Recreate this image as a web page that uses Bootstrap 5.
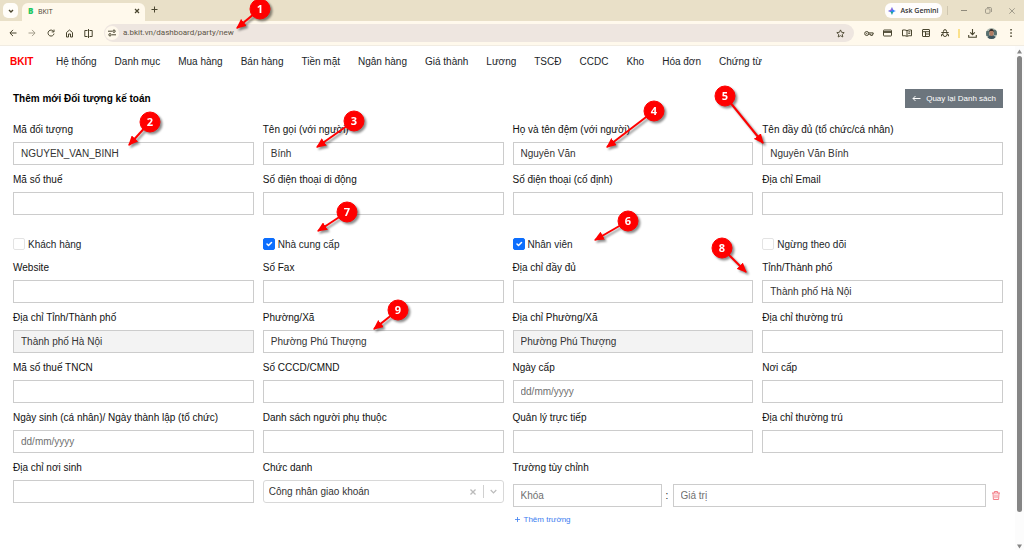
<!DOCTYPE html>
<html lang="vi">
<head>
<meta charset="utf-8">
<meta name="viewport" content="width=device-width, initial-scale=1">
<title>BKIT</title>
<link rel="stylesheet" href="https://cdn.jsdelivr.net/npm/bootstrap@5.3.0/dist/css/bootstrap.min.css">
<style>
  body { font-family: "Liberation Sans", Arial, sans-serif; font-size: 10px; line-height: 15px; color: #212529; }
  svg { display: block; fill: none; stroke: currentColor; }
  svg[stroke="none"] { stroke: none; }
  .plain-btn { border: 0; background: none; padding: 0; color: inherit; display: flex; align-items: center; justify-content: center; flex: none; }

  /* browser frame */
  .chrome { font-family: "Open Sans", "Noto Sans", sans-serif; color: #49452f; }
  .tab-strip { height: 21px; background: #e9e0c8; padding-left: 3px; }
  .tab-menu { width: 15px; height: 15px; border-radius: 5px; background: #fffdf9; margin: 3px 4px 0 0; }
  .tab-open { width: 123px; height: 18px; margin-top: 3px; padding: 0 5px 2px 6px; border-radius: 6px 6px 0 0; background: #fff9ec; font-size: 7px; }
  .tab-icon { color: #1fc862; font: 900 8px/12px "Open Sans", sans-serif; width: 10px; }
  .gemini { width: 57px; height: 15px; margin-top: 3px; border-radius: 6px; background: #fffdfd; font-size: 7px; font-weight: 600; color: #333; }
  .win-line { width: 1px; height: 9px; background: #cfc6af; margin: 6px 4px 0 5px; }
  .win-btn { width: 24px; height: 21px; color: #8f8a7c; }
  .toolbar { height: 25px; background: #fff9ec; padding: 0 4px 0 3px; border-bottom: 1px solid #f1ece2; }
  .tool-btn { width: 19px; height: 19px; }
  .address { height: 18px; border-radius: 9px; background: #eee6e0; margin: 0 5px 0 6px; }
  .site-btn { width: 14px; height: 14px; border-radius: 7px; background: #fff9ec; margin-left: 1px; }
  .address input { border: 0; background: none; outline: 0; font-family: Roboto, sans-serif; font-size: 8px; line-height: 14px; padding: 0 0 0 4px; color: #5c5546; min-width: 0; }
  .tool-line { width: 9px; }
  .tool-line span { width: 2px; height: 9px; background: #fbe18c; }
  .avatar { width: 11px; height: 11px; border-radius: 50%; overflow: hidden; }

  /* page */
  .site-nav { padding: 8px 10px 7px; }
  .site-nav .brand { color: #f00; font-weight: 700; text-decoration: none; width: 37px; }
  .site-nav .nav-link { color: #212529; padding: 0 9px; }
  .page { padding: 13px 12px 8px 13px; }
  .page-title { font-size: 10px; line-height: 19px; font-weight: 700; color: #000; margin: 0; }
  .back-btn { --bs-btn-padding-x: 6px; --bs-btn-padding-y: 0; --bs-btn-font-size: 8px; --bs-btn-border-radius: 0; line-height: 17px; gap: 5px; }
  .fields { --bs-gutter-x: 9px; margin-top: 14px; }
  .field { position: relative; margin-bottom: 7px; }
  .field label, .field-name { display: block; color: #111; line-height: 15px; margin-bottom: 5px; }
  .field .form-control { height: 23px; border: 1px solid #ccc; border-radius: 0; font-size: 10px; line-height: 15px; padding: 0 7px; color: #333; }
  .form-control::placeholder { color: #707070; }
  .field .form-control[readonly] { background: #f3f3f3; }
  .tick { position: relative; height: 16px; margin: 14px 0 8px; gap: 3px; }
  .tick .form-check-input { width: 12px; height: 12px; margin: 0; flex: none; border-color: #e3e3e3; border-radius: 2px; }
  .tick .form-check-input:checked { border-color: #0d6efd; }
  .picker { height: 23px; border: 1px solid #d8d8d8; border-radius: 3px; color: #bbb; }
  .picker select { appearance: none; border: 0; background: none; outline: 0; color: #333; padding: 0 5px; min-width: 0; }
  .picker .plain-btn { width: 19px; }
  .picker-line { width: 1px; height: 13px; background: #d0d0d0; }
  .custom-row { margin-top: 9px; }
  .custom-row .key { width: 149px; }
  .colon { width: 11px; }
  .trash { width: 17px; padding-right: 3px; color: #f2707a; }
  .trash.plain-btn { justify-content: flex-end; }
  .add-btn { color: #3b7df0; font-size: 8px; gap: 4px; margin: 5px 0 0 2px; }

  /* scroll track beside the page */
  .track { width: 9px; background: #fcfcfc; color: #858585; padding: 3px 0 0; }
  .track .thumb { width: 5px; height: 91%; border-radius: 3px; background: #858585; margin-top: 2px; }

  /* numbered callouts lying over the form; each one's origin is the centre of its disc */
  .callout { position: absolute; z-index: 5; width: 1px; height: 1px; overflow: visible; pointer-events: none; filter: drop-shadow(2px 2px 1px rgba(0,0,0,.45)); stroke: #f00; fill: #f00; }
  .callout text { fill: #fff; stroke: none; font: 700 11px "Open Sans", sans-serif; text-anchor: middle; }
  .c1 { left: 156px; top: -15px; }
  .c2 { left: 137px; top: 0; }
  .c3 { left: 91px; top: -1px; }
  .c4 { left: 141px; top: -11px; }
  .c5 { left: -37px; top: -26px; }
  .c6 { left: 115px; top: -15px; }
  .c7 { left: 84px; top: -24px; }
  .c8 { left: -40px; top: -12px; }
  .c9 { left: 135px; top: 0; }
</style>
<script src="https://cdn.jsdelivr.net/npm/bootstrap@5.3.0/dist/js/bootstrap.bundle.min.js"></script>
</head>
<body class="min-vh-100 d-flex flex-column bg-white">

<svg width="0" height="0" class="position-absolute" aria-hidden="true">
  <defs>
    <marker id="tip" viewBox="0 0 9 8" refX="8" refY="4" markerWidth="10" markerHeight="9" markerUnits="userSpaceOnUse" orient="auto"><path d="M0 0L9 4L0 8Z" fill="#f00" stroke="none"/></marker>
  </defs>
</svg>

<header class="chrome">
  <div class="tab-strip d-flex">
    <button class="plain-btn tab-menu" aria-label="Tabs"><svg width="6" height="6" viewBox="0 0 6 6" stroke-width="1.4"><path d="M1 2l2 2 2-2"/></svg></button>
    <div class="tab-open d-flex align-items-center">
      <span class="tab-icon">B</span><span class="flex-grow-1">BKIT</span>
      <button class="plain-btn" aria-label="Close tab"><svg width="6" height="6" viewBox="0 0 6 6" stroke-width="1.200"><path d="M1 1l4 4M5 1L1 5"/></svg></button>
    </div>
    <button class="plain-btn tool-btn" aria-label="New tab"><svg width="7" height="7" viewBox="0 0 7 7" stroke-width="1"><path d="M3.500 .5v6M.5 3.500h6"/></svg></button>
    <button class="plain-btn gemini ms-auto gap-1"><svg width="8" height="8" viewBox="0 0 8 8" stroke="none"><path d="M4 0Q4.600 3.400 8 4Q4.600 4.600 4 8Q3.400 4.600 0 4Q3.400 3.400 4 0Z" fill="#3186ff"/><path d="M4 0Q4.400 2 4.700 2.700L2 4.500Q1 4.200 0 4Q3.400 3.400 4 0Z" fill="#a55bd0"/><path d="M2.500 4.700L4.500 4.500 4.700 5.300Q4.300 6.500 4 8Q3.400 5.200 2.500 4.700Z" fill="#20b060"/></svg>Ask Gemini</button>
    <span class="win-line"></span>
    <button class="plain-btn win-btn" aria-label="Minimize"><svg width="6" height="6" viewBox="0 0 6 6" stroke-width="1"><path d="M0 2.500h6"/></svg></button>
    <button class="plain-btn win-btn" aria-label="Restore"><svg width="7" height="7" viewBox="0 0 7 7" stroke-width=".8"><rect x=".5" y="1.800" width="4.500" height="4.500" rx="1"/><path d="M2 .5h3.200q1.300 0 1.300 1.300V5"/></svg></button>
    <button class="plain-btn win-btn" aria-label="Close"><svg width="6" height="6" viewBox="0 0 6 6" stroke-width=".8"><path d="M.3.3l5.400 5.400M5.700.3L.3 5.700"/></svg></button>
  </div>

  <div class="toolbar d-flex align-items-center">
    <button class="plain-btn tool-btn" aria-label="Back"><svg width="8" height="8" viewBox="0 0 8 8" stroke-width="1"><path d="M7.500 4H1M4 .9L.9 4 4 7.100"/></svg></button>
    <button class="plain-btn tool-btn opacity-50" aria-label="Forward"><svg width="8" height="8" viewBox="0 0 8 8" stroke-width="1"><path d="M.5 4H7M4 .9L7.100 4 4 7.100"/></svg></button>
    <button class="plain-btn tool-btn" aria-label="Reload"><svg width="8" height="8" viewBox="0 0 8 8" stroke-width="1"><path d="M6.600 2.500A3 3 0 1 0 7 4.600M7 .6v2.300H4.700"/></svg></button>
    <button class="plain-btn tool-btn" aria-label="Home"><svg width="9" height="9" viewBox="0 0 8 9" stroke-width="1"><path d="M1 8V3.500L4 1l3 2.500V8H5V5H3v3z"/></svg></button>
    <button class="plain-btn tool-btn" aria-label="Split view"><svg width="9" height="9" viewBox="0 0 9 9" stroke-width="1"><path d="M3.500 1.500H.8v6h2.700M5.500 1.500h2.700v6H5.500M4.500 0v9"/></svg></button>
    <div class="address position-relative flex-grow-1 d-flex align-items-center">
      <button class="plain-btn site-btn" aria-label="Site information"><svg width="8" height="8" viewBox="0 0 8 8" stroke-width="1"><path d="M0 2.200h4M4 5.800h4"/><circle cx="6" cy="2.200" r="1.200"/><circle cx="2" cy="5.800" r="1.200"/></svg></button>
      <input class="flex-grow-1" type="text" value="a.bkit.vn/dashboard/party/new" aria-label="Address">
      <button class="plain-btn tool-btn me-1" aria-label="Bookmark"><svg width="9" height="9" viewBox="0 0 9 9" stroke-width=".9"><path d="M4.500.9l1.100 2.400 2.600.3-1.900 1.800.5 2.600-2.300-1.300L2.200 8l.5-2.600L.8 3.600l2.600-.3z"/></svg></button>
      <svg class="callout c1" aria-hidden="true"><path d="M0 0L-23 19" stroke-width="2" marker-end="url(#tip)"/><circle r="10" /><text y="4">1</text></svg>
    </div>
    <button class="plain-btn tool-btn" aria-label="Passwords"><svg width="10" height="7" viewBox="0 0 10 7" stroke-width="1"><circle cx="2.700" cy="3.500" r="2"/><path d="M4.700 2.900h4.500v1.300H8.400V5.400H6.700V4.200H4.700"/><circle cx="2.700" cy="3.500" r=".3"/></svg></button>
    <button class="plain-btn tool-btn" aria-label="Payment methods"><svg width="9" height="8" viewBox="0 0 9 8" stroke-width="1"><rect x=".5" y="1" width="8" height="6" rx=".6"/><path d="M.5 3h8" stroke-width="1.800"/></svg></button>
    <button class="plain-btn tool-btn" aria-label="Reading mode"><svg width="10" height="8" viewBox="0 0 10 8" stroke-width="1"><path d="M5 1.600Q3 .6.5 1v5.800Q3 6.400 5 7.300 7 6.400 9.500 6.800V1Q7 .6 5 1.600zV7M6.300 3l2-.3M6.300 4.500l2-.3"/></svg></button>
    <button class="plain-btn tool-btn" aria-label="Layout"><svg width="8" height="8" viewBox="0 0 8 8" stroke-width="1"><rect x=".5" y=".5" width="7" height="7" rx=".5"/><path d="M.5 2.700h7M3.500 2.700v4.800M3.500 5h4"/></svg></button>
    <button class="plain-btn tool-btn" aria-label="Debug"><svg width="8" height="8" viewBox="0 0 8 8" stroke-width="1"><path d="M2.300 2.800L3 .8h2l.7 2M.3 3.500h7.400M2 4v1.500a2 2 0 0 0 4 0V4M.5 7.300V5.600H2M7.500 7.300V5.600H6"/></svg></button>
    <div class="tool-line d-flex justify-content-center"><span></span></div>
    <button class="plain-btn tool-btn" aria-label="Downloads"><svg width="9" height="9" viewBox="0 0 9 9" stroke-width="1.100"><path d="M4.500 0v5.500M2.200 3.400l2.300 2.300 2.300-2.300M.7 6v2.300h7.600V6"/></svg></button>
    <button class="plain-btn tool-btn" aria-label="Profile"><span class="avatar"><svg width="11" height="11" viewBox="0 0 11 11" stroke="none"><path d="M0 0h11v11H0z" fill="#a9b5ac"/><path d="M0 3h3v5H0zM8 2h3v5H8z" fill="#58706f"/><path d="M1 11q1-4 4.500-4t4.500 4z" fill="#3e555d"/><ellipse cx="5.500" cy="5" rx="2.200" ry="3" fill="#b17d64"/><path d="M3 4.500Q2.800 1 5.500 1T8 4.500L7 3H4z" fill="#352d2b"/></svg></span></button>
    <button class="plain-btn tool-btn" aria-label="Menu"><svg width="2" height="8" viewBox="0 0 2 8" stroke="none"><path d="M.3 0h1.500v1.500H.3zM.3 3.200h1.500v1.500H.3zM.3 6.400h1.500v1.500H.3z" fill="#49452f"/></svg></button>
  </div>
</header>

<div class="d-flex flex-grow-1">
  <div class="flex-grow-1">
    <nav class="site-nav d-flex">
      <a class="brand" href="#">BKIT</a>
      <div class="nav">
        <a class="nav-link" href="#">Hệ thống</a>
        <a class="nav-link" href="#">Danh mục</a>
        <a class="nav-link" href="#">Mua hàng</a>
        <a class="nav-link" href="#">Bán hàng</a>
        <a class="nav-link" href="#">Tiền mặt</a>
        <a class="nav-link" href="#">Ngân hàng</a>
        <a class="nav-link" href="#">Giá thành</a>
        <a class="nav-link" href="#">Lương</a>
        <a class="nav-link" href="#">TSCĐ</a>
        <a class="nav-link" href="#">CCDC</a>
        <a class="nav-link" href="#">Kho</a>
        <a class="nav-link" href="#">Hóa đơn</a>
        <a class="nav-link" href="#">Chứng từ</a>
      </div>
    </nav>

    <main class="page">
      <div class="d-flex justify-content-between align-items-center">
        <h1 class="page-title">Thêm mới Đối tượng kế toán</h1>
        <button type="button" class="btn btn-secondary back-btn d-flex align-items-center"><svg width="9" height="7" viewBox="0 0 9 7" stroke-width="1"><path d="M8.500 3.500H1M3.500 1L1 3.500 3.500 6"/></svg>Quay lại Danh sách</button>
      </div>

      <form class="row fields">
        <div class="col-6 col-md-3"><div class="field"><label for="code">Mã đối tượng</label><input class="form-control" id="code" type="text" value="NGUYEN_VAN_BINH">
          <svg class="callout c2" aria-hidden="true"><path d="M0 0L-21 23" stroke-width="2" marker-end="url(#tip)"/><circle r="10"/><text y="4">2</text></svg></div></div>
        <div class="col-6 col-md-3"><div class="field"><label for="given">Tên gọi (với người)</label><input class="form-control" id="given" type="text" value="Bính">
          <svg class="callout c3" aria-hidden="true"><path d="M0 0L-37 26" stroke-width="2" marker-end="url(#tip)"/><circle r="10"/><text y="4">3</text></svg></div></div>
        <div class="col-6 col-md-3"><div class="field"><label for="family">Họ và tên đệm (với người)</label><input class="form-control" id="family" type="text" value="Nguyễn Văn">
          <svg class="callout c4" aria-hidden="true"><path d="M0 0L-47 36" stroke-width="2" marker-end="url(#tip)"/><circle r="10"/><text y="4">4</text></svg></div></div>
        <div class="col-6 col-md-3"><div class="field"><label for="full">Tên đầy đủ (tổ chức/cá nhân)</label><input class="form-control" id="full" type="text" value="Nguyễn Văn Bính">
          <svg class="callout c5" aria-hidden="true"><path d="M0 0L38 47" stroke-width="2" marker-end="url(#tip)"/><circle r="10"/><text y="4">5</text></svg></div></div>

        <div class="col-6 col-md-3"><div class="field"><label for="tax">Mã số thuế</label><input class="form-control" id="tax" type="text"></div></div>
        <div class="col-6 col-md-3"><div class="field"><label for="mobile">Số điện thoại di động</label><input class="form-control" id="mobile" type="text"></div></div>
        <div class="col-6 col-md-3"><div class="field"><label for="phone">Số điện thoại (cố định)</label><input class="form-control" id="phone" type="text"></div></div>
        <div class="col-6 col-md-3"><div class="field"><label for="email">Địa chỉ Email</label><input class="form-control" id="email" type="text"></div></div>

        <div class="col-6 col-md-3"><div class="tick d-flex align-items-center"><input class="form-check-input" type="checkbox" id="customer"><label for="customer">Khách hàng</label></div></div>
        <div class="col-6 col-md-3"><div class="tick d-flex align-items-center"><input class="form-check-input" type="checkbox" id="supplier" checked><label for="supplier">Nhà cung cấp</label>
          <svg class="callout c7" aria-hidden="true"><path d="M0 0L-29 19" stroke-width="2" marker-end="url(#tip)"/><circle r="10"/><text y="4">7</text></svg></div></div>
        <div class="col-6 col-md-3"><div class="tick d-flex align-items-center"><input class="form-check-input" type="checkbox" id="staff" checked><label for="staff">Nhân viên</label>
          <svg class="callout c6" aria-hidden="true"><path d="M0 0L-33 19" stroke-width="2" marker-end="url(#tip)"/><circle r="10"/><text y="4">6</text></svg></div></div>
        <div class="col-6 col-md-3"><div class="tick d-flex align-items-center"><input class="form-check-input" type="checkbox" id="stopped"><label for="stopped">Ngừng theo dõi</label></div></div>

        <div class="col-6 col-md-3"><div class="field"><label for="web">Website</label><input class="form-control" id="web" type="text"></div></div>
        <div class="col-6 col-md-3"><div class="field"><label for="fax">Số Fax</label><input class="form-control" id="fax" type="text"></div></div>
        <div class="col-6 col-md-3"><div class="field"><label for="address">Địa chỉ đầy đủ</label><input class="form-control" id="address" type="text"></div></div>
        <div class="col-6 col-md-3"><div class="field"><label for="province">Tỉnh/Thành phố</label><input class="form-control" id="province" type="text" value="Thành phố Hà Nội">
          <svg class="callout c8" aria-hidden="true"><path d="M0 0L24 24" stroke-width="2" marker-end="url(#tip)"/><circle r="10"/><text y="4">8</text></svg></div></div>

        <div class="col-6 col-md-3"><div class="field"><label for="provinceAddr">Địa chỉ Tỉnh/Thành phố</label><input class="form-control" id="provinceAddr" type="text" value="Thành phố Hà Nội" readonly></div></div>
        <div class="col-6 col-md-3"><div class="field"><label for="ward">Phường/Xã</label><input class="form-control" id="ward" type="text" value="Phường Phú Thượng">
          <svg class="callout c9" aria-hidden="true"><path d="M0 0L-24 19" stroke-width="2" marker-end="url(#tip)"/><circle r="10"/><text y="4">9</text></svg></div></div>
        <div class="col-6 col-md-3"><div class="field"><label for="wardAddr">Địa chỉ Phường/Xã</label><input class="form-control" id="wardAddr" type="text" value="Phường Phú Thượng" readonly></div></div>
        <div class="col-6 col-md-3"><div class="field"><label for="home1">Địa chỉ thường trú</label><input class="form-control" id="home1" type="text"></div></div>

        <div class="col-6 col-md-3"><div class="field"><label for="pit">Mã số thuế TNCN</label><input class="form-control" id="pit" type="text"></div></div>
        <div class="col-6 col-md-3"><div class="field"><label for="idcard">Số CCCD/CMND</label><input class="form-control" id="idcard" type="text"></div></div>
        <div class="col-6 col-md-3"><div class="field"><label for="issued">Ngày cấp</label><input class="form-control" id="issued" type="text" placeholder="dd/mm/yyyy"></div></div>
        <div class="col-6 col-md-3"><div class="field"><label for="issuer">Nơi cấp</label><input class="form-control" id="issuer" type="text"></div></div>

        <div class="col-6 col-md-3"><div class="field"><label for="born">Ngày sinh (cá nhân)/ Ngày thành lập (tổ chức)</label><input class="form-control" id="born" type="text" placeholder="dd/mm/yyyy"></div></div>
        <div class="col-6 col-md-3"><div class="field"><label for="dependants">Danh sách người phụ thuộc</label><input class="form-control" id="dependants" type="text"></div></div>
        <div class="col-6 col-md-3"><div class="field"><label for="manager">Quản lý trực tiếp</label><input class="form-control" id="manager" type="text"></div></div>
        <div class="col-6 col-md-3"><div class="field"><label for="home2">Địa chỉ thường trú</label><input class="form-control" id="home2" type="text"></div></div>

        <div class="col-6 col-md-3"><div class="field"><label for="birthplace">Địa chỉ nơi sinh</label><input class="form-control" id="birthplace" type="text"></div></div>
        <div class="col-6 col-md-3"><div class="field"><label for="title">Chức danh</label>
          <div class="picker d-flex align-items-center">
            <select id="title" class="flex-grow-1"><option>Công nhân giao khoán</option></select>
            <button type="button" class="plain-btn" aria-label="Xóa"><svg width="6" height="6" viewBox="0 0 5 5" stroke-width="1.100"><path d="M.4.4l4.200 4.200M4.600.4L.4 4.600"/></svg></button>
            <span class="picker-line"></span>
            <button type="button" class="plain-btn" aria-label="Mở danh sách"><svg width="7" height="5" viewBox="0 0 7 5" stroke-width="1.200"><path d="M.7 1l2.800 2.800L6.300 1"/></svg></button>
          </div></div></div>
        <div class="col-12 col-md-6"><div class="field">
          <span class="field-name">Trường tùy chỉnh</span>
          <div class="custom-row d-flex align-items-center">
            <input class="form-control key flex-shrink-0" type="text" placeholder="Khóa" aria-label="Khóa">
            <span class="colon text-center flex-shrink-0">:</span>
            <input class="form-control" type="text" placeholder="Giá trị" aria-label="Giá trị">
            <button type="button" class="plain-btn trash" aria-label="Xóa trường"><svg width="8" height="9" viewBox="0 0 8 9" stroke-width=".9"><path d="M0 2h8M2.400 2V.5h3.200V2M1 2l.4 6.500h5.200L7 2M3 3.500v3.700M5 3.500v3.700"/></svg></button>
          </div>
          <button type="button" class="plain-btn add-btn"><svg width="5" height="5" viewBox="0 0 5 5" stroke-width=".8"><path d="M2.500 0v5M0 2.500h5"/></svg>Thêm trường</button>
        </div></div>
      </form>
    </main>
  </div>

  <div class="track d-flex flex-column align-items-center flex-shrink-0" aria-hidden="true">
    <svg width="5" height="5" viewBox="0 0 5 5" stroke="none"><path d="M2.500 .5L5 4.500H0z" fill="#858585"/></svg>
    <div class="thumb"></div>
    <svg class="mt-auto" width="5" height="6" viewBox="0 0 5 6" stroke="none"><path d="M2.500 4.500L5 .5H0z" fill="#858585"/></svg>
  </div>
</div>
</body>
</html>
